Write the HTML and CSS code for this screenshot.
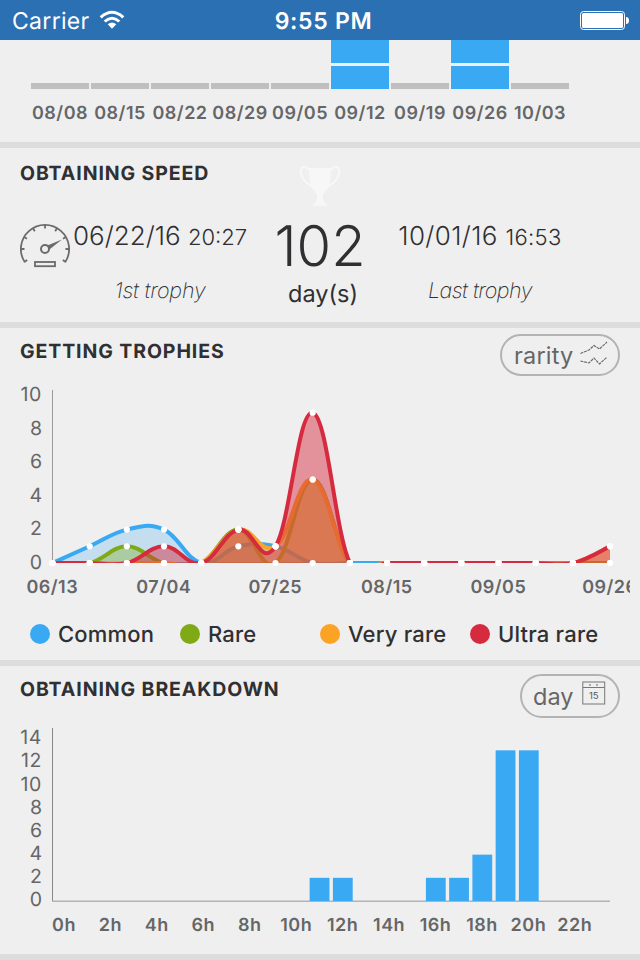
FILE: index.html
```html
<!DOCTYPE html>
<html lang="en">
<head>
<meta charset="utf-8">
<title>Trophy statistics</title>
<link rel="stylesheet" href="styles.css">
</head>
<body>
<header class="status">
  <div class="carrier"><span>Carrier</span>
    <svg width="26" height="20" viewBox="0 0 26 20"><g fill="none" stroke="#fff" stroke-width="3"><path d="M1.7 7.4Q13 -2.8 24.3 7.4"/><path d="M5.7 11.5Q13 5 20.3 11.5"/></g><path d="M8.7 14.3Q13 10.5 17.3 14.3L13 18.7Z" fill="#fff"/></svg>
  </div>
  <div class="time">9:55 PM</div>
  <svg class="battery" width="50" height="20" viewBox="0 0 50 20"><rect x=".5" y=".5" width="44" height="18" rx="3" fill="none" stroke="#fff"/><rect x="2" y="2" width="41" height="15" rx="1.5" fill="#fff"/><path d="M46 6Q49 6 49 9.5T46 13Z" fill="#fff"/></svg>
</header>

<section class="weeks">
  <div class="week"><i class="empty"></i><span>08/08</span></div>
  <div class="week"><i class="empty"></i><span>08/15</span></div>
  <div class="week"><i class="empty"></i><span>08/22</span></div>
  <div class="week"><i class="empty"></i><span>08/29</span></div>
  <div class="week"><i class="empty"></i><span>09/05</span></div>
  <div class="week"><i class="block"></i><i class="block"></i><span>09/12</span></div>
  <div class="week"><i class="empty"></i><span>09/19</span></div>
  <div class="week"><i class="block"></i><i class="block"></i><span>09/26</span></div>
  <div class="week"><i class="empty"></i><span>10/03</span></div>
</section>

<section class="speed">
  <h2>OBTAINING SPEED</h2>
  <div class="speed-row">
    <svg class="gauge" width="50" height="46" viewBox="0 0 50 46"><g fill="none" stroke="#6b6b6b" stroke-width="1.8"><path d="M4.8 38.2A24.1 24.1 0 1 1 45.2 38.2"/><path d="M4.4 38l2.8-2M45.6 38l-2.8-2M1 25h3.5M49 25h-3.5M4 13l3 1.8M46 13l-3 1.8M13 4.2l1.8 3M37 4.2l-1.8 3M25 1v3.5"/><circle cx="25" cy="25" r="4" stroke-width="2"/><rect x="15" y="38" width="20" height="4.2"/></g><path d="M27.3 21.5L42 15.5L29.4 25.4Z" fill="#6b6b6b"/></svg>
    <div class="edge first"><p class="date">06/22/16 <small>20:27</small></p><p class="note">1st trophy</p></div>
    <div class="days">
      <svg width="42" height="42" viewBox="0 0 42 42"><path d="M10 3H32C32 16 31 23 24.5 28.5Q23 32 25 36L28.5 41H13.5L17 36Q19 32 17.5 28.5C11 23 10 16 10 3Z" fill="#f7f7f7"/><path d="M10 5C6-1 1 2 2 8C3 15 8 18 13 22M32 5C36-1 41 2 40 8C39 15 34 18 29 22" fill="none" stroke="#f7f7f7" stroke-width="2"/></svg>
      <p class="count">102</p><p class="unit">day(s)</p>
    </div>
    <div class="edge last"><p class="date">10/01/16 <small>16:53</small></p><p class="note">Last trophy</p></div>
  </div>
</section>

<section class="getting">
  <div class="head"><h2>GETTING TROPHIES</h2>
    <button class="pill rarity"><span>rarity</span><svg width="30" height="24" viewBox="0 0 30 24"><g fill="none" stroke="#666" stroke-width="1.1" stroke-dasharray="3 .8"><path d="M1.5 12.5L10 9L15 4.5L20.5 8L28 1"/><path d="M1.5 20L10 22L15 17L20.5 23L28 16"/></g></svg></button>
  </div>
  <svg class="chart" id="lines" width="630" height="230" viewBox="0 380 630 230"></svg>
  <ul class="legend">
    <li class="common"><span>Common</span></li><li class="rare"><span>Rare</span></li><li class="very"><span>Very rare</span></li><li class="ultra"><span>Ultra rare</span></li>
  </ul>
</section>

<section class="breakdown">
  <div class="head"><h2>OBTAINING BREAKDOWN</h2>
    <button class="pill day"><span>day</span><svg width="24" height="24" viewBox="0 0 24 24"><g fill="none" stroke="#777"><rect x=".8" y="1" width="21.9" height="22"/><path d="M1 6.5H22.5"/></g><circle cx="8" cy="4" r=".8" fill="#555"/><circle cx="15" cy="4" r=".8" fill="#555"/><text x="11.8" y="17.7" font-size="9.5" text-anchor="middle" fill="#555">15</text></svg></button>
  </div>
  <svg class="chart" id="hours" width="630" height="226" viewBox="0 720 630 226"></svg>
</section>
<script src="charts.js"></script>
</body>
</html>
```
FILE: styles.css
```css
* { box-sizing: border-box; margin: 0; padding: 0; }
body { width: 640px; height: 960px; overflow: hidden; background: #efefef; color: #303032; font-family: Inter, "Liberation Sans", sans-serif; text-rendering: geometricPrecision; }
svg { display: block; flex: none; }
section { border-bottom: 6px solid #dddddd; overflow: hidden; }
h2 { font-size: 19.5px; line-height: 24px; font-weight: 700; letter-spacing: .9px; white-space: nowrap; }

.status { height: 40px; background: #2a70b2; color: #fff; display: grid; grid-template-columns: 200px 1fr 200px; align-items: center; padding: 0 10px 0 12px; }
.carrier { display: flex; align-items: center; gap: 10px; font-size: 23px; letter-spacing: .3px; }
.carrier span { padding-top: 1px; width: 78px; }
.carrier svg { margin: 0 0 1px -1px; }
.time { text-align: center; font-size: 23px; font-weight: 600; letter-spacing: .7px; white-space: nowrap; padding: 1px 0 0 5px; }
.battery { justify-self: end; margin-top: 2px; }

.weeks { height: 108px; display: flex; padding-left: 30px; }
.week { width: 60px; height: 85px; padding: 0 1px; display: flex; flex-direction: column; justify-content: flex-end; align-items: center; }
.week i { width: 58px; flex: none; }
.week .empty { height: 6px; background: #bfbfbf; }
.week .block { height: 23px; background: #39a9f4; margin-top: 3px; }
.week span { font-size: 18px; line-height: 22px; height: 22px; margin: 14px 0 0; font-weight: 600; color: #666; letter-spacing: .5px; white-space: nowrap; }

.speed { height: 180px; padding: 13px 20px 0; }
.speed-row { display: grid; grid-template-columns: 50px 180px 146px 1fr; height: 160px; margin-top: -33px; }
.gauge { margin-top: 72px; }
.edge { text-align: center; padding-top: 69px; }
.last { width: 168px; }
.date { font-size: 26px; line-height: 32px; font-weight: 300; white-space: nowrap; }
.date small { font-size: 22px; }
.last .date { letter-spacing: .35px; }
.note { margin-top: 23px; font-size: 21.5px; line-height: 28px; font-style: italic; font-weight: 200; letter-spacing: -.5px; white-space: nowrap; }
.first .note { letter-spacing: -.2px; }
.days { display: flex; flex-direction: column; align-items: center; padding-top: 13px; padding-right: 6px; }
.count { font-size: 56px; line-height: 68px; font-weight: 300; height: 68px; margin-top: 5px; }
.unit { font-size: 23.5px; line-height: 28px; margin-left: 6px; }

.getting { height: 338px; }
.head { height: 52px; padding: 11px 20px 0; display: flex; justify-content: space-between; align-items: flex-start; }
.pill { border: 2px solid #b3b3b3; border-radius: 22px; background: transparent; color: #666; font: 23.5px Inter, sans-serif; display: flex; align-items: center; white-space: nowrap; }
.rarity { width: 120px; height: 42px; margin-top: -5px; padding-left: 12px; gap: 5px; letter-spacing: .2px; }
.rarity svg { margin-top: -4px; }
.day { width: 100px; height: 44px; margin-top: -3px; padding-left: 11px; gap: 9px; }
.day svg { margin-top: -7px; }
.chart { font-family: Inter, sans-serif; }
.value { font-size: 19.5px; fill: #666; text-anchor: end; }
.value.wide { letter-spacing: .6px; }
.label { font-size: 18px; font-weight: 600; fill: #666; text-anchor: middle; letter-spacing: .5px; }
.legend { list-style: none; padding: 12px 30px 0; display: grid; grid-template-columns: 150px 140px 150px 1fr; }
.legend li { display: flex; align-items: center; gap: 8px; font-size: 22px; line-height: 24px; font-weight: 500; letter-spacing: .2px; white-space: nowrap; }
.legend span { margin: 1px 0 -1px; }
.legend li::before { content: ""; width: 20px; height: 20px; border-radius: 50%; }
.common::before { background: #39a9f4; }
.rare::before { background: #7faa16; }
.very::before { background: #fca326; }
.ultra::before { background: #d62b3f; }
.breakdown { height: 294px; }
.breakdown .head { height: 54px; }
```
FILE: charts.js
```js
const text = (cls, x, y, s) => `<text class="${cls}" x="${x}" y="${y}">${s}</text>`;

// Weekly trophies, one curve per rarity
const step = 37.17, unit = 16.7, base = 563;
const series = [
  { color: "#39a9f4", alpha: 0.24, v: [0,1,2,2,0,1,1,0,0,0,0,0,0,0,0,0] },
  { color: "#7faa16", alpha: 0.36, v: [0,0,1,0,0,2,0,5,0,0,0,0,0,0,0,0] },
  { color: "#fca326", alpha: 0.45, v: [0,0,0,0,0,2,1,5,0,0,0,0,0,0,0,1] },
  { color: "#d62b3f", alpha: 0.48, v: [0,0,0,1,0,2,1,9,0,0,0,0,0,0,0,1] }
];
let out = '<defs><clipPath id="plot"><rect x="52" y="380" width="558" height="183"/></clipPath></defs>';
out += '<path d="M52.5 390V563M52 562.5H610" stroke="#999" fill="none"/>';
let dots = "";
out += '<g clip-path="url(#plot)">';
for (const s of series) {
  const p = s.v.map((v, i) => [52.5 + i * step, base - v * unit]);
  const at = i => p[Math.max(0, Math.min(p.length - 1, i))];
  let d = `M${p[0]}`;
  for (let i = 1; i < p.length; i++) {
    const a = at(i - 2), b = at(i - 1), c = at(i), e = at(i + 1);
    d += `C${b[0] + (c[0] - a[0]) * 0.2},${b[1] + (c[1] - a[1]) * 0.2} ${c[0] - (e[0] - b[0]) * 0.2},${c[1] - (e[1] - b[1]) * 0.2} ${c}`;
  }
  out += `<path d="${d}V563H52.5Z" fill="${s.color}" fill-opacity="${s.alpha}"/><path d="${d}" fill="none" stroke="${s.color}" stroke-width="4"/>`;
  dots += p.map(q => `<circle cx="${q[0]}" cy="${q[1]}" r="3.1" fill="#fff"/>`).join("");
}
out += "</g>" + dots;
for (let v = 0; v <= 10; v += 2) out += text(v > 9 ? "value wide" : "value", 42, 568.8 - v * 16.75, v);
["06/13", "07/04", "07/25", "08/15", "09/05", "09/26"].forEach((s, i) => {
  out += text("label", 52.3 + i * step * 3, 593.3, s);
});
document.getElementById("lines").innerHTML = out;

// Trophies by hour of day
const hours = { 11: 2, 12: 2, 16: 2, 17: 2, 18: 4, 19: 13, 20: 13 };
out = '<path d="M52.5 728V901" stroke="#888"/><path d="M52 901.2H610" stroke="#b3b3b3" stroke-width="1.6"/>';
for (const h in hours) out += `<rect x="${53.9 + h * 23.25}" y="${901 - hours[h] * 11.59}" width="19.8" height="${hours[h] * 11.59}" fill="#39a9f4"/>`;
for (let v = 0; v <= 14; v += 2) out += text(v > 9 ? "value wide" : "value", 42, 906.3 - v * 11.57, v);
for (let h = 0; h < 24; h += 2) out += text("label", 64 + h * 23.22, 931.2, h + "h");
document.getElementById("hours").innerHTML = out;
```
